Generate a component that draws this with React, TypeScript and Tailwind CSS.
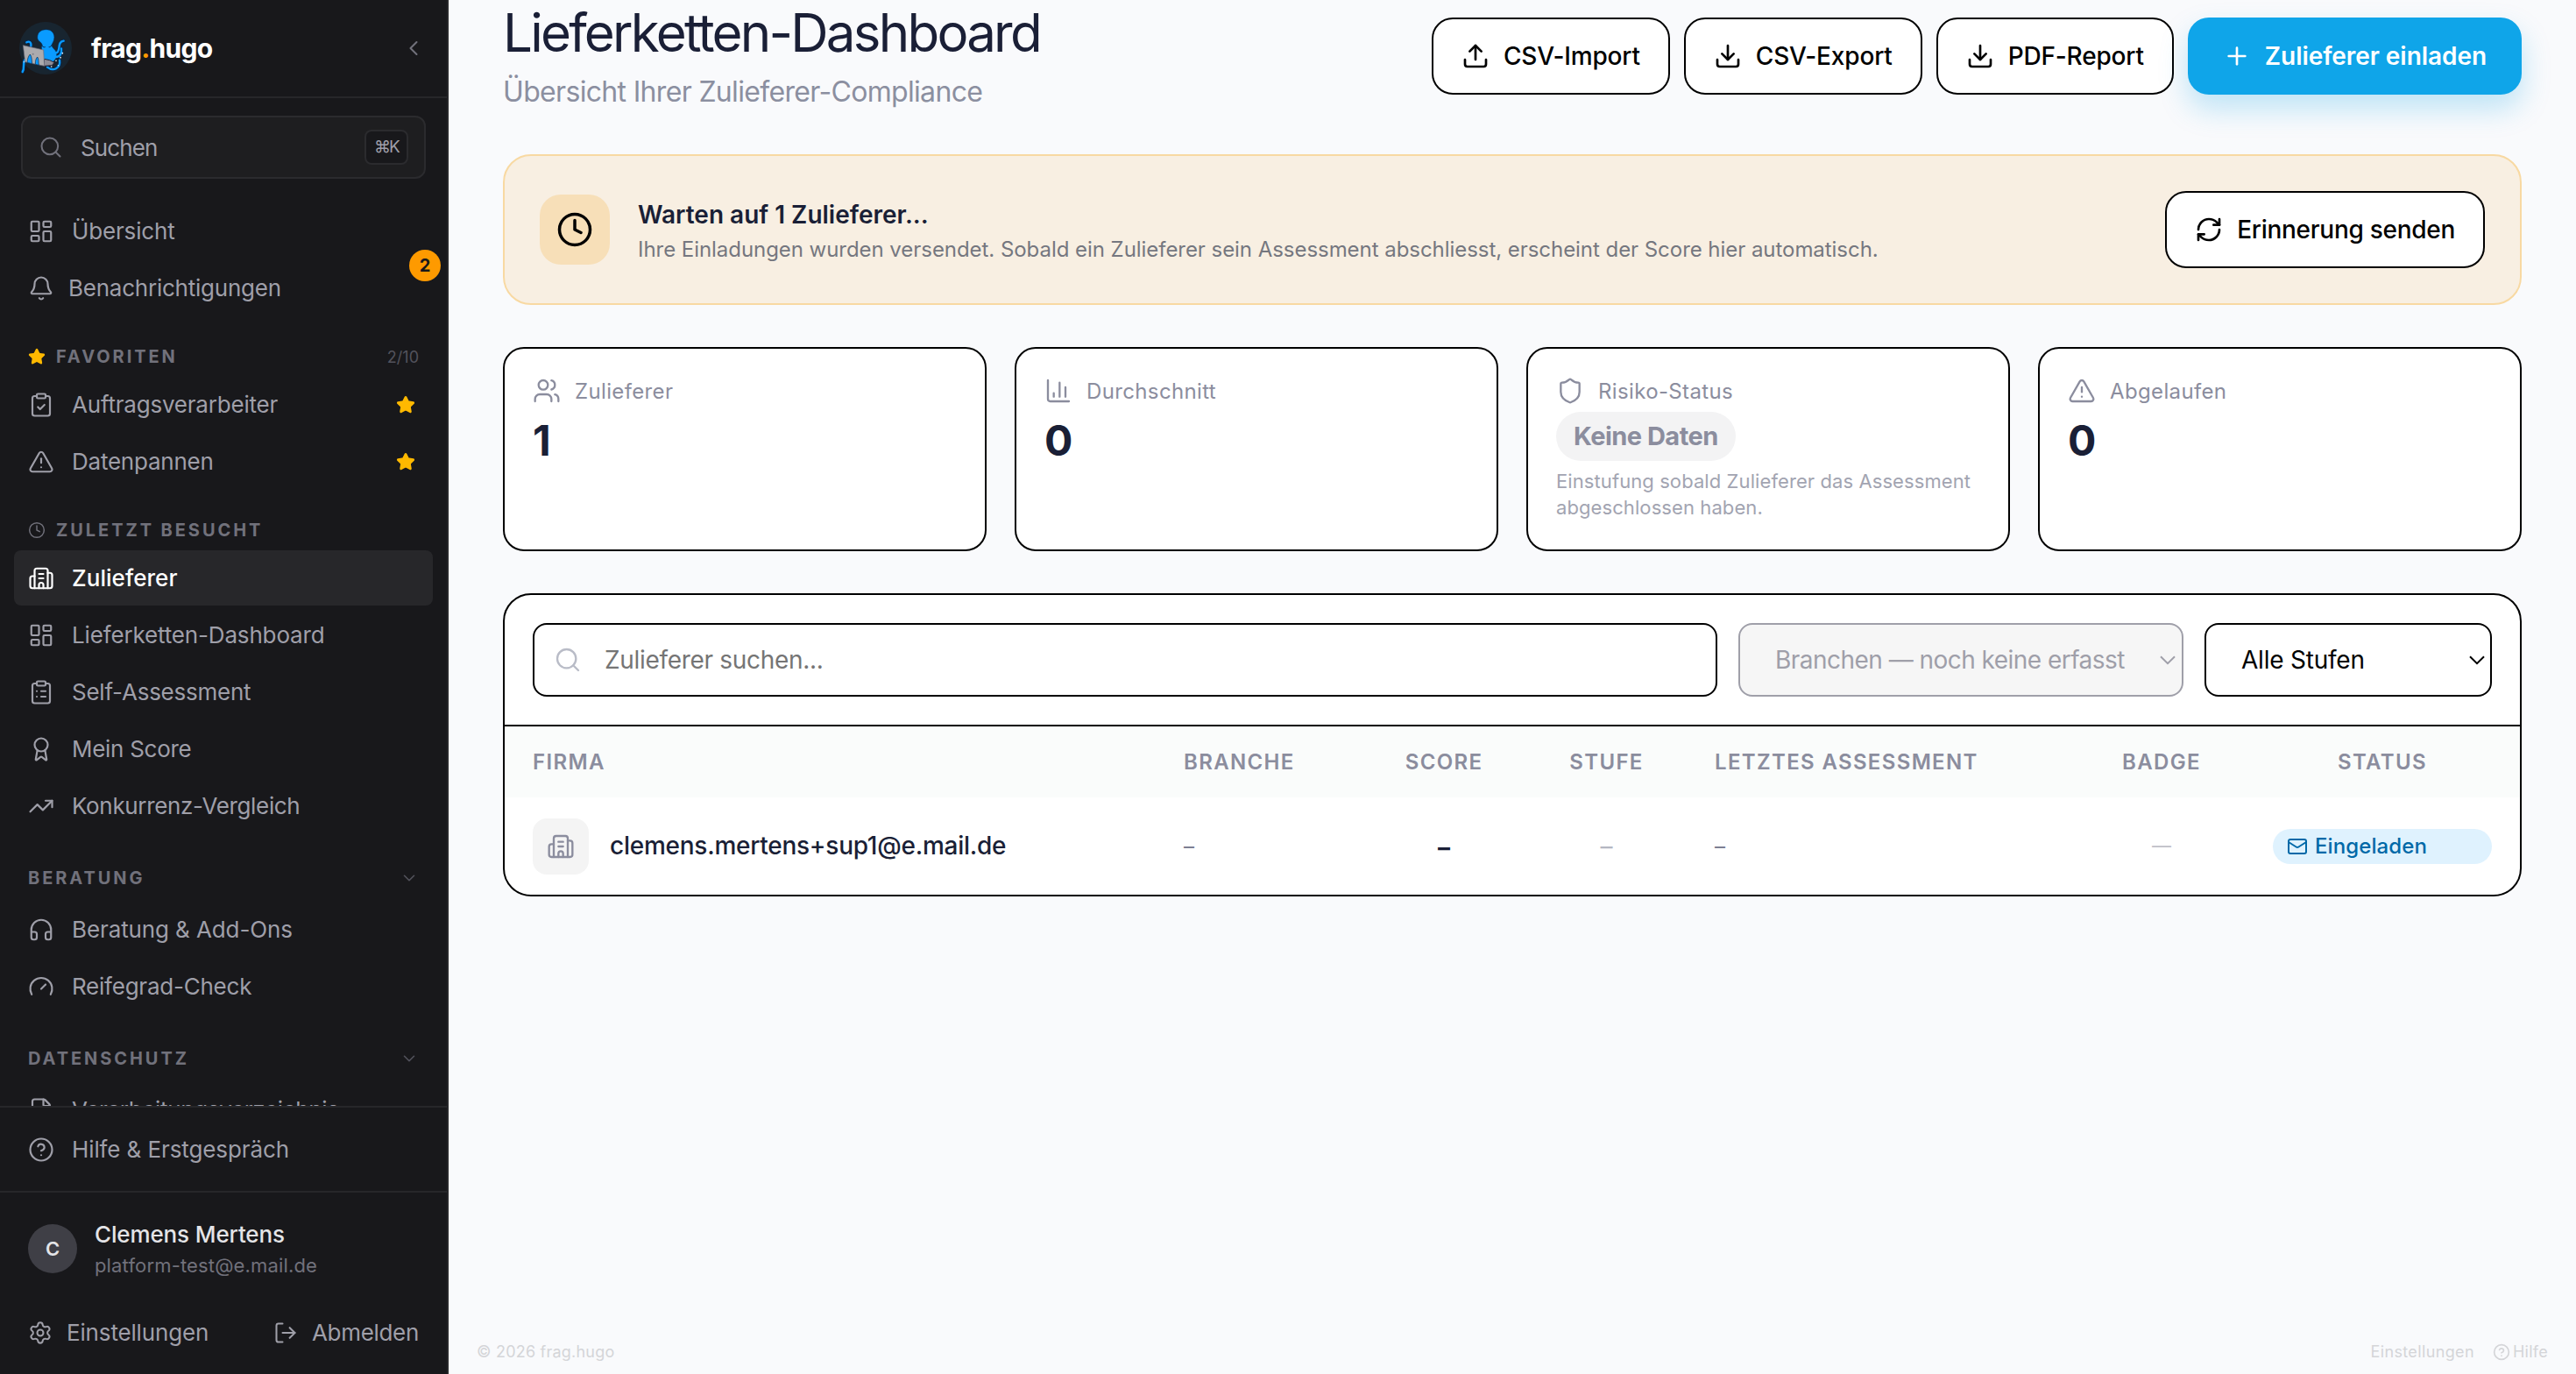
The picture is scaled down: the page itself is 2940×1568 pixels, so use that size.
import type { ReactNode } from 'react';
import {
  Award,
  Bell,
  Building2,
  ChartColumn,
  ChevronDown,
  ChevronLeft,
  CircleQuestionMark,
  ClipboardCheck,
  ClipboardList,
  Clock,
  Download,
  FileText,
  Gauge,
  Headphones,
  LayoutDashboard,
  LogOut,
  Mail,
  Plus,
  RefreshCw,
  Search,
  Settings,
  Shield,
  Star,
  TrendingUp,
  TriangleAlert,
  Upload,
  Users,
  type LucideIcon,
} from 'lucide-react';
import clsx from 'clsx';

interface NavEntry {
  label: string;
  icon: LucideIcon;
  active?: boolean;
  starred?: boolean;
  tracking?: string;
}

const favorites: NavEntry[] = [
  { label: 'Auftragsverarbeiter', icon: ClipboardCheck, starred: true, tracking: 'tracking-[-0.008em]' },
  { label: 'Datenpannen', icon: TriangleAlert, starred: true, tracking: 'tracking-[-0.009em]' },
];

const recent: NavEntry[] = [
  { label: 'Zulieferer', icon: Building2, active: true, tracking: 'tracking-[0.002em]' },
  { label: 'Lieferketten-Dashboard', icon: LayoutDashboard, tracking: 'tracking-[-0.006em]' },
  { label: 'Self-Assessment', icon: ClipboardList, tracking: 'tracking-[-0.009em]' },
  { label: 'Mein Score', icon: Award, tracking: 'tracking-[-0.011em]' },
  { label: 'Konkurrenz-Vergleich', icon: TrendingUp, tracking: 'tracking-[-0.013em]' },
];

const consulting: NavEntry[] = [
  { label: 'Beratung & Add-Ons', icon: Headphones },
  { label: 'Reifegrad-Check', icon: Gauge, tracking: 'tracking-[-0.009em]' },
];

function HugoLogo() {
  return (
    <svg width="60" height="60" viewBox="24 21 180 180" className="overflow-visible" fill="none">
      <circle cx="114" cy="111" r="90" fill="#182530" />
      <g stroke="#06264a" strokeWidth="12" strokeLinecap="round">
        <path d="M62 104c4-12-4-18-14-14" />
        <path d="M148 128c22-4 2-38 28-42" />
        <path d="M140 140c26 6 30-14 28-28" />
        <path d="M120 176c20 16 46 4 42-24" />
        <path d="M44 150c-10 12 0 28-9 42" />
      </g>
      <path d="M86 74c0-18 13-27 30-27s28 10 28 27c0 12-6 17-8 25-1 9 6 13 12 20 8 10 4 30-8 38-14 8-32 4-40-6V105c4-4 2-8-2-13-7-6-12-9-12-18z" fill="#0a9bff" stroke="#06264a" strokeWidth="2" />
      <g stroke="#0a9bff" strokeWidth="7" strokeLinecap="round">
        <path d="M64 104c2-14-6-18-15-13" />
        <path d="M148 128c22-4 2-38 28-42" />
        <path d="M140 140c26 6 30-14 28-28" />
        <path d="M120 176c20 16 46 4 42-24" />
        <path d="M44 150c-10 12 0 28-9 42" />
      </g>
      <path d="M110 148l18 4 16 8-8 10-28 2z" fill="#8e8e98" stroke="#26263a" strokeWidth="3" />
      <path d="M37 101l70 16 3 55-66-14z" fill="#ababae" stroke="#6a6a78" strokeWidth="2" />
      <path d="M51 160c1-12 4-22 10-28 7 8 5 22 7 32zM79 166c0-12 2-20 7-25 6 8 3 19 5 28z" fill="#0a9bff" stroke="#06264a" strokeWidth="2" />
      <circle cx="71" cy="131" r="3" fill="#7c7c84" />
      <path d="M100 98c2 8 8 11 13 9M136 98c-2 7-7 10-11 9" stroke="#06264a" strokeWidth="3" />
      <g fill="#e8f4ff">
        <circle cx="172" cy="128" r="2.5" />
        <circle cx="165" cy="143" r="2.5" />
        <circle cx="150" cy="154" r="2.5" />
        <circle cx="134" cy="174" r="2.5" />
        <circle cx="157" cy="170" r="2" />
        <circle cx="40" cy="158" r="2" />
      </g>
    </svg>
  );
}

function NavItem({ label, icon: Icon, active, starred, tracking = 'tracking-[-0.004em]' }: NavEntry) {
  return (
    <a
      className={clsx(
        'mb-0.5 flex h-[63px] items-center gap-5 rounded-lg px-4',
        tracking,
        active ? 'bg-[#27272a] font-medium text-white' : 'text-[#9f9fa9]'
      )}
    >
      <Icon size={30} strokeWidth={1.75} className="shrink-0" />
      <span className="flex-1 whitespace-nowrap">{label}</span>
      {starred && <Star size={22} className="mr-[4px] fill-[#ffb900] text-[#ffb900]" />}
    </a>
  );
}

function SectionLabel({ children }: { children: ReactNode }) {
  return <span className="text-xl font-bold tracking-[0.147em] text-[#71717b]">{children}</span>;
}

function CollapsibleHeader({ title }: { title: string }) {
  return (
    <div className="flex h-[76px] items-center px-4 pt-[22px]">
      <SectionLabel>{title}</SectionLabel>
      <ChevronDown size={22} strokeWidth={1.75} className="ml-auto text-[#52525c]" />
    </div>
  );
}

function Sidebar() {
  return (
    <aside className="flex h-full w-[512px] shrink-0 flex-col border-r-2 border-[#27272a] bg-[#18181b] text-[26px] text-[#9f9fa9]">
      <div className="flex h-28 shrink-0 items-center border-b-2 border-[#27272a] pr-6 pl-[22px]">
        <HugoLogo />
        <span className="ml-[22px] text-[30px] font-bold tracking-[-0.024em] text-white">
          frag<span className="text-[#fe9a00]">.</span>hugo
        </span>
        <ChevronLeft size={28} strokeWidth={1.75} className="ml-auto text-[#71717b]" />
      </div>

      <div className="mx-6 mt-5 flex h-[72px] shrink-0 items-center rounded-xl border-2 border-[#2b2b2e] bg-[#1e1e20] px-[18px]">
        <Search size={28} strokeWidth={1.75} className="text-[#71717b]" />
        <span className="ml-5 tracking-[-0.034em]">Suchen</span>
        <kbd className="ml-auto flex h-10 w-[50px] items-center justify-center rounded-lg border-2 border-[#2b2b2e] bg-[#18181b] font-[Inter,'DejaVu_Sans',sans-serif] text-[19px] tracking-[-0.1em]">
          ⌘K
        </kbd>
      </div>

      <nav className="mt-7 min-h-0 flex-1 overflow-hidden px-4">
        <NavItem label="Übersicht" icon={LayoutDashboard} tracking="tracking-[-0.006em]" />
        <div className="relative mb-0.5 flex h-[63px] items-center gap-4 px-4 tracking-[-0.009em]">
          <Bell size={30} strokeWidth={1.75} />
          <span>Benachrichtigungen</span>
          <span className="absolute -top-3 -right-[9px] flex size-9 items-center justify-center rounded-full bg-[#fe9a00] text-xl font-bold tracking-normal text-[#18181b]">
            2
          </span>
        </div>

        <div className="flex h-[68px] items-center px-4 pt-[22px]">
          <Star size={20} className="mr-3 fill-[#ffb900] text-[#ffb900]" />
          <SectionLabel>FAVORITEN</SectionLabel>
          <span className="ml-auto pt-0.5 text-lg text-[#52525c]">2/10</span>
        </div>
        {favorites.map((item) => (
          <NavItem key={item.label} {...item} />
        ))}

        <div className="flex h-[68px] items-center px-4 pt-[22px]">
          <Clock size={20} strokeWidth={1.75} className="mr-3 text-[#71717b]" />
          <SectionLabel>ZULETZT BESUCHT</SectionLabel>
        </div>
        {recent.map((item) => (
          <NavItem key={item.label} {...item} />
        ))}

        <CollapsibleHeader title="BERATUNG" />
        {consulting.map((item) => (
          <NavItem key={item.label} {...item} />
        ))}

        <CollapsibleHeader title="DATENSCHUTZ" />
        <NavItem label="Verarbeitungsverzeichnis" icon={FileText} tracking="tracking-[-0.013em]" />
      </nav>

      <div className="h-[97px] shrink-0 border-t-2 border-[#27272a] px-4 pt-4">
        <NavItem label="Hilfe & Erstgespräch" icon={CircleQuestionMark} />
      </div>

      <div className="h-[209px] shrink-0 border-t-2 border-[#27272a] px-8 pt-9">
        <div className="flex h-14 items-center gap-5">
          <div className="flex size-14 items-center justify-center rounded-full bg-[#3f3f46] text-[22px] font-semibold text-[#e4e4e7]">
            C
          </div>
          <div className="pt-0.5">
            <p className="leading-9 font-medium tracking-[-0.005em] text-[#e4e4e7]">Clemens Mertens</p>
            <p className="text-[22px] leading-[34px] tracking-[0.007em] text-[#71717b]">platform-test@e.mail.de</p>
          </div>
        </div>
        <div className="mt-9 flex h-[63px] items-center justify-between">
          <span className="flex items-center gap-4 tracking-[-0.006em]">
            <Settings size={28} strokeWidth={1.75} />
            Einstellungen
          </span>
          <span className="flex items-center gap-4 tracking-[-0.012em]">
            <LogOut size={28} strokeWidth={1.75} />
            Abmelden
          </span>
        </div>
      </div>
    </aside>
  );
}

function OutlineButton({ icon: Icon, className, children }: { icon: LucideIcon; className?: string; children: ReactNode }) {
  return (
    <button
      className={clsx(
        'flex h-[88px] items-center gap-4 rounded-3xl border-2 border-black bg-white px-8 text-[28px] font-medium whitespace-nowrap text-black',
        className
      )}
    >
      <Icon size={32} />
      {children}
    </button>
  );
}

function StatCard({ label, icon: Icon, children }: { label: string; icon: LucideIcon; children: ReactNode }) {
  return (
    <div className="h-[233px] rounded-3xl border-2 border-black bg-white p-8">
      <div className="mb-2 flex h-8 items-center gap-4 text-2xl tracking-[0.015em] text-[#8b8d9e]">
        <Icon size={32} strokeWidth={1.75} />
        <span className="pt-px">{label}</span>
      </div>
      {children}
    </div>
  );
}

function StatValue({ children }: { children: ReactNode }) {
  return <p className="pt-px text-5xl leading-[64px] font-bold text-[#1a1f36]">{children}</p>;
}

function SelectArrow() {
  return (
    <svg width="18" height="11" viewBox="0 0 18 11" fill="none" className="ml-auto" stroke="currentColor" strokeWidth="2">
      <path d="M1 1.2l8 8 8-8" />
    </svg>
  );
}

const columns = 'grid grid-cols-[743px_235px_124px_247px_383px_254px_250px] px-8';

function SupplierTable() {
  return (
    <section className="mt-12 overflow-hidden rounded-[32px] border-2 border-black bg-white">
      <div className="flex gap-6 border-b-2 border-black p-8 text-[28px]">
        <div className="flex h-[84px] w-[1352px] items-center gap-[26px] rounded-2xl border-2 border-black pl-[22px] tracking-[-0.011em] text-[#757575]">
          <Search size={32} strokeWidth={1.75} className="text-[#b9bcc7]" />
          Zulieferer suchen...
        </div>
        <div className="flex h-[84px] w-[508px] items-center rounded-2xl border-2 border-[#9f9fa9] bg-[#f6f6f6] pr-[7px] pl-10 tracking-[-0.019em] whitespace-nowrap text-[#9f9fa9]">
          Branchen — noch keine erfasst
          <SelectArrow />
        </div>
        <div className="flex h-[84px] w-[328px] items-center rounded-2xl border-2 border-black pr-[6px] pl-10 tracking-[-0.008em] text-black">
          Alle Stufen
          <SelectArrow />
        </div>
      </div>

      <div className={clsx(columns, 'h-[81px] items-center bg-[#fafcfb] text-2xl font-semibold tracking-[0.056em] text-[#8b8d9e]')}>
        <span>FIRMA</span>
        <span>BRANCHE</span>
        <span className="text-center">SCORE</span>
        <span className="text-center">STUFE</span>
        <span>LETZTES ASSESSMENT</span>
        <span className="text-center">BADGE</span>
        <span className="text-center">STATUS</span>
      </div>

      <div className={clsx(columns, 'items-center pt-6 pb-[23px] text-2xl text-[#7c7f92]')}>
        <div className="flex items-center gap-6">
          <div className="flex size-16 items-center justify-center rounded-2xl bg-[#f4f4f4] text-[#8b8d9e]">
            <Building2 size={32} strokeWidth={1.75} />
          </div>
          <span className="text-[28px] font-medium tracking-[-0.009em] text-[#1a1f36]">clemens.mertens+sup1@e.mail.de</span>
        </div>
        <span>–</span>
        <span className="pt-[3px] text-center text-[28px] font-bold text-[#1a1f36]">–</span>
        <span className="pt-px text-center text-[28px] text-[#b4b7c2]">–</span>
        <span>–</span>
        <span className="text-center text-[22px] text-[#c0c0c8]">—</span>
        <span className="flex h-10 items-center gap-2 rounded-full bg-[#dff2fe] px-4 font-medium tracking-[0.004em] text-[#0069a8]">
          <Mail size={24} />
          Eingeladen
        </span>
      </div>
    </section>
  );
}

export default function App() {
  return (
    <div className="flex h-[1568px] w-full overflow-hidden bg-[#f9fafc] font-[Inter,sans-serif]">
      <Sidebar />

      <main className="flex flex-1 flex-col">
        <div className="px-[62px]">
          <header className="flex h-32 justify-between">
            <div>
              <h1 className="pt-px text-[60px] leading-[72px] tracking-[-0.046em] text-[#1a1f36]">Lieferketten-Dashboard</h1>
              <p className="mt-2 text-[32px] leading-[48px] tracking-[-0.021em] text-[#8b8fa0]">
                Übersicht Ihrer Zulieferer-Compliance
              </p>
            </div>
            <div className="flex gap-4 pt-5">
              <OutlineButton icon={Upload} className="tracking-[-0.006em]">CSV-Import</OutlineButton>
              <OutlineButton icon={Download} className="tracking-[-0.006em]">CSV-Export</OutlineButton>
              <OutlineButton icon={Download} className="tracking-[-0.006em]">PDF-Report</OutlineButton>
              <button className="flex h-[88px] items-center gap-4 rounded-3xl bg-[#0fa5e9] px-10 text-[28px] font-semibold tracking-[-0.002em] whitespace-nowrap text-white shadow-[0_16px_32px_rgba(14,165,233,0.25)]">
                <Plus size={32} />
                Zulieferer einladen
              </button>
            </div>
          </header>

          <section className="mt-12 flex h-[172px] items-center rounded-[32px] border-2 border-[#f8d9a2] bg-[#f8efe2] px-10">
            <div className="flex size-20 items-center justify-center rounded-3xl bg-[#f7dfb8] text-black">
              <Clock size={42} />
            </div>
            <div className="ml-8 pt-[5px]">
              <h2 className="text-[28px] leading-10 font-semibold text-[#1a1f36]">Warten auf 1 Zulieferer...</h2>
              <p className="text-2xl leading-10 tracking-[-0.002em] text-[#75777f]">
                Ihre Einladungen wurden versendet. Sobald ein Zulieferer sein Assessment abschliesst, erscheint der Score
                hier automatisch.
              </p>
            </div>
            <div className="ml-auto">
              <OutlineButton icon={RefreshCw} className="tracking-[-0.01em]">Erinnerung senden</OutlineButton>
            </div>
          </section>

          <section className="mt-12 grid grid-cols-4 gap-8">
            <StatCard label="Zulieferer" icon={Users}>
              <StatValue>1</StatValue>
            </StatCard>
            <StatCard label="Durchschnitt" icon={ChartColumn}>
              <StatValue>0</StatValue>
            </StatCard>
            <StatCard label="Risiko-Status" icon={Shield}>
              <span className="flex h-14 w-fit items-center rounded-full bg-[#f3f3f4] px-5 text-[29px] font-bold tracking-[-0.018em] text-[#8b8d9e]">
                Keine Daten
              </span>
              <p className="mt-2 text-[22px] leading-[30px] tracking-[0.004em] text-[#a2a4b1]">
                Einstufung sobald Zulieferer das Assessment abgeschlossen haben.
              </p>
            </StatCard>
            <StatCard label="Abgelaufen" icon={TriangleAlert}>
              <StatValue>0</StatValue>
            </StatCard>
          </section>

          <SupplierTable />
        </div>

        <footer className="mt-auto flex h-[51px] items-center px-8 text-lg tracking-[0.012em] text-[#d4d5d8]">
          <span>© 2026 frag.hugo</span>
          <span className="ml-auto tracking-[0.02em]">Einstellungen</span>
          <span className="ml-[21px] flex items-center gap-[3px] tracking-[0.015em]">
            <CircleQuestionMark size={20} />
            Hilfe
          </span>
        </footer>
      </main>
    </div>
  );
}
